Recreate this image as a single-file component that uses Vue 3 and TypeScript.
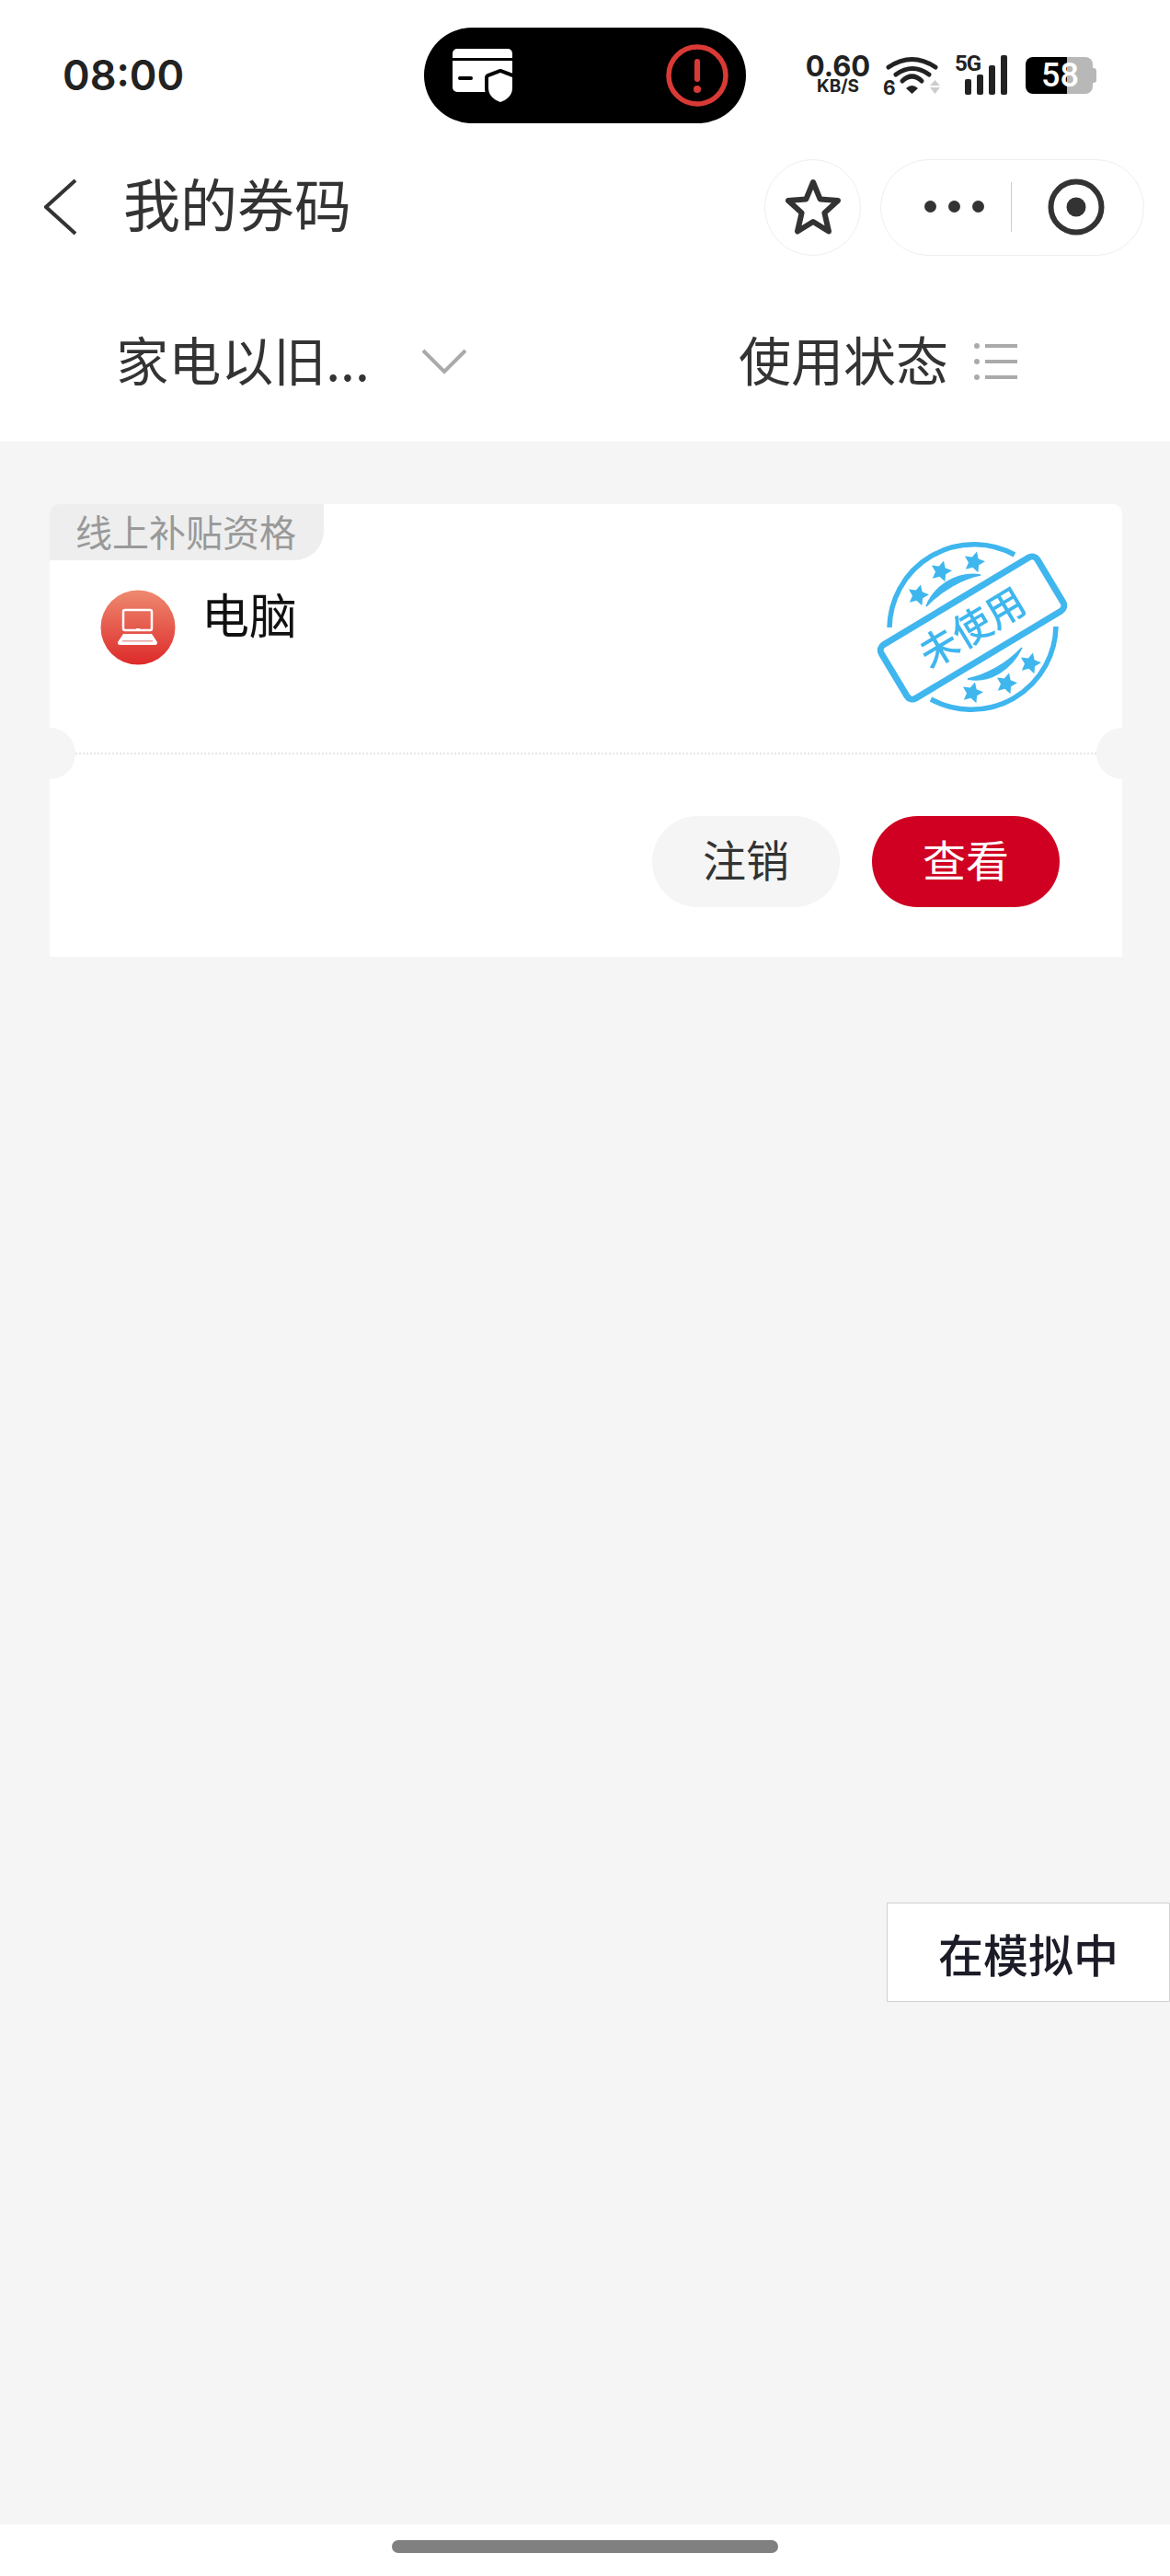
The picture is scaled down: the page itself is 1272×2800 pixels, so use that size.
<script setup lang="ts">
const stampStars: [number, number][] = [
  [98, 97],
  [123, 71],
  [159, 61],
  [157, 203],
  [194, 193],
  [220, 171],
];

const starPoints = (cx: number, cy: number, r: number) => {
  const pts: string[] = [];
  for (let i = 0; i < 10; i++) {
    const rad = i % 2 === 0 ? r : r * 0.5;
    const a = (Math.PI / 5) * i - Math.PI / 2 + 0.25;
    pts.push(`${(cx + rad * Math.cos(a)).toFixed(1)},${(cy + rad * Math.sin(a)).toFixed(1)}`);
  }
  return pts.join(' ');
};
</script>

<template>
  <div class="page">
    <div class="status">
      <span class="time">08:00</span>
      <div class="pill">
        <svg class="pill-card" width="66" height="60" viewBox="0 0 66 60">
          <rect x="0" y="1" width="65" height="47" rx="5" fill="#fff" />
          <rect x="0" y="11" width="65" height="3" fill="#000" />
          <rect x="6" y="31" width="16" height="4" rx="2" fill="#000" />
          <path d="M52 27 L65 32 V44 C65 52 58 57 52 59 C46 57 39 52 39 44 V32 Z" fill="#000" stroke="#000" stroke-width="8" stroke-linejoin="round" />
          <path d="M52 27 L65 32 V44 C65 52 58 57 52 59 C46 57 39 52 39 44 V32 Z" fill="#fff" />
        </svg>
        <svg class="pill-alert" width="68" height="68" viewBox="0 0 68 68">
          <circle cx="34" cy="34" r="31" fill="none" stroke="#d93a36" stroke-width="5.5" />
          <rect x="31" y="16" width="6" height="25" rx="3" fill="#d93a36" />
          <circle cx="34" cy="49" r="4" fill="#d93a36" />
        </svg>
      </div>
      <div class="sys">
        <div class="speed">
          <span class="speed-num">0.60</span>
          <span class="speed-unit">KB/S</span>
        </div>
        <div class="wifi">
          <span class="wifi-six">6</span>
          <svg width="62" height="44" viewBox="0 0 62 44">
            <path d="M6 13 Q31.5 -4 57 13" fill="none" stroke="#222" stroke-width="5" stroke-linecap="round" />
            <path d="M14 21 Q32 8 50 21" fill="none" stroke="#222" stroke-width="5" stroke-linecap="round" />
            <path d="M21 28 Q31.5 18 42 28" fill="none" stroke="#222" stroke-width="5" stroke-linecap="round" />
            <path d="M25 36 Q31.5 30 38 36 L31.5 42 Z" fill="#222" />
            <path d="M51 33 L56.5 27 L62 33 Z" fill="#ccc" />
            <path d="M51 35 L62 35 L56.5 42 Z" fill="#ccc" />
          </svg>
        </div>
        <div class="signal">
          <span class="signal-5g">5G</span>
          <svg width="58" height="44" viewBox="0 0 58 44">
            <rect x="11" y="26" width="7" height="17" rx="2" fill="#222" />
            <rect x="24" y="21" width="7" height="22" rx="2" fill="#222" />
            <rect x="37" y="11" width="7" height="32" rx="2" fill="#222" />
            <rect x="50" y="0" width="7" height="43" rx="2" fill="#222" />
          </svg>
        </div>
        <div class="battery">
          <span class="battery-fill"></span>
          <span class="battery-rest"></span>
          <span class="battery-nub"></span>
          <span class="battery-num">58</span>
        </div>
      </div>
    </div>

    <div class="nav">
      <svg class="back" width="36" height="62" viewBox="0 0 36 62">
        <path d="M34 2 L2 31 L34 60" fill="none" stroke="#333" stroke-width="4" />
      </svg>
      <span class="title">我的券码</span>
      <div class="fav">
        <svg width="60" height="62" viewBox="0 0 60 62">
          <path d="M30 4 L37.6 22.4 L57 24 L42.4 37.4 L47 57.5 L30 47 L13 57.5 L17.6 37.4 L3 24 L22.4 22.4 Z" fill="none" stroke="#333" stroke-width="6" stroke-linejoin="round" />
        </svg>
      </div>
      <div class="capsule">
        <div class="dots">
          <i></i><i></i><i></i>
        </div>
        <span class="cap-line"></span>
        <svg width="62" height="62" viewBox="0 0 62 62">
          <circle cx="31" cy="31" r="27.5" fill="none" stroke="#333" stroke-width="6" />
          <circle cx="31" cy="31" r="10.5" fill="#333" />
        </svg>
      </div>
    </div>

    <div class="filters">
      <div class="filter">
        <span class="filter-text">家电以旧...</span>
        <svg class="filter-arrow" width="50" height="28" viewBox="0 0 50 28">
          <path d="M2 2 L25 25 L48 2" fill="none" stroke="#aaa" stroke-width="4" />
        </svg>
      </div>
      <div class="filter filter-right">
        <span class="filter-text">使用状态</span>
        <svg class="filter-list" width="50" height="40" viewBox="0 0 50 40">
          <circle cx="5" cy="3" r="3" fill="#aaa" />
          <circle cx="5" cy="20" r="3" fill="#aaa" />
          <circle cx="5" cy="37" r="3" fill="#aaa" />
          <path d="M14 3 H49 M14 20 H49 M14 37 H49" stroke="#aaa" stroke-width="4" />
        </svg>
      </div>
    </div>

    <div class="content">
      <div class="card">
        <span class="tag">线上补贴资格</span>
        <div class="card-main">
          <svg class="pc-icon" width="82" height="82" viewBox="0 0 82 82">
            <defs>
              <linearGradient id="pcGrad" x1="0" y1="0" x2="0" y2="1">
                <stop offset="0" stop-color="#ee8a70" />
                <stop offset="1" stop-color="#dd2a2a" />
              </linearGradient>
            </defs>
            <circle cx="41" cy="41" r="40.5" fill="url(#pcGrad)" />
            <rect x="25" y="22" width="31" height="22" rx="2" fill="none" stroke="#fff" stroke-width="2.5" />
            <rect x="39" y="42" width="4" height="2" fill="#fff" />
            <path d="M25 48 H56 L62 57 Q62 60 60 60 H21 Q19 60 19 57 Z" fill="#fff" />
            <rect x="24" y="55" width="33" height="1.5" fill="#e9a0a0" />
          </svg>
          <span class="pc-name">电脑</span>
        </div>
        <svg class="stamp" width="300" height="240" viewBox="0 0 300 240">
          <g fill="none" stroke="#3fb6ee" stroke-width="5.5">
            <path d="M67 132 A92 92 0 0 1 203 53" />
            <path d="M248 131 A92 92 0 0 1 112 210" />
          </g>
          <path d="M107 109 C116 87 140 71 166 75 C146 79 124 91 107 109 Z" fill="#3fb6ee" stroke="#3fb6ee" stroke-width="1.5" />
          <path d="M211 154 C200 177 176 193 152 188 C172 184 194 172 211 154 Z" fill="#3fb6ee" stroke="#3fb6ee" stroke-width="1.5" />
          <polygon v-for="(s, i) in stampStars" :key="i" :points="starPoints(s[0], s[1], 12)" fill="#3fb6ee" />
          <g transform="translate(157 132.5) rotate(-31)">
            <rect x="-99" y="-34" width="198" height="68" rx="7" fill="#fff" stroke="#3fb6ee" stroke-width="7" />
            <text class="stamp-text" x="0" y="15" text-anchor="middle">未使用</text>
          </g>
        </svg>
        <div class="perforation">
          <span class="notch notch-left"></span>
          <span class="notch notch-right"></span>
        </div>
        <div class="card-actions">
          <button type="button" class="btn">注销</button>
          <button type="button" class="btn btn-primary">查看</button>
        </div>
      </div>
      <div class="simulating">在模拟中</div>
    </div>

    <div class="home">
      <span class="home-bar"></span>
    </div>
  </div>
</template>

<style scoped>
.page {
  width: 1272px;
  height: 2800px;
  display: flex;
  flex-direction: column;
  background: #fff;
  font-family: "Noto Sans CJK SC", "Noto Sans", sans-serif;
  color: #333;
  overflow: hidden;
}

/* status bar */
.status {
  height: 165px;
  flex: none;
  box-sizing: border-box;
  padding: 30px 0 0 68px;
  display: flex;
  align-items: flex-start;
}
.time {
  width: 393px;
  font-family: Inter, sans-serif;
  font-weight: 600;
  font-size: 45px;
  line-height: 104px;
  color: #222;
}
.pill {
  width: 350px;
  height: 104px;
  border-radius: 52px;
  background: #000;
  display: flex;
  align-items: center;
  justify-content: space-between;
  box-sizing: border-box;
  padding: 0 19px 0 31px;
}
.sys {
  margin-left: 65px;
  height: 44px;
  margin-top: 30px;
  display: flex;
  align-items: flex-start;
  color: #222;
}
.speed {
  width: 70px;
  display: flex;
  flex-direction: column;
  align-items: center;
  font-family: Inter, sans-serif;
  font-weight: 700;
}
.speed-num {
  font-size: 31px;
  line-height: 25px;
  margin-top: -1px;
}
.speed-unit {
  font-size: 19px;
  line-height: 18px;
  margin-top: 1px;
}
.wifi {
  width: 62px;
  margin-left: 14px;
  position: relative;
}
.wifi svg {
  display: block;
}
.wifi-six {
  position: absolute;
  left: 0;
  top: 25px;
  font-family: Inter, sans-serif;
  font-weight: 700;
  font-size: 21px;
  line-height: 22px;
}
.signal {
  margin-left: 16px;
  width: 58px;
  position: relative;
}
.signal svg {
  display: block;
}
.signal-5g {
  position: absolute;
  left: 0;
  top: 0;
  font-family: Roboto, sans-serif;
  font-weight: 700;
  font-size: 24px;
  line-height: 18px;
  letter-spacing: -1px;
}
.battery {
  margin-left: 19px;
  margin-top: 2px;
  width: 77px;
  height: 40px;
  display: flex;
  position: relative;
}
.battery-fill {
  width: 45px;
  background: #000;
  border-radius: 8px 0 0 8px;
}
.battery-rest {
  width: 28px;
  background: #b8b8b8;
  border-radius: 0 8px 8px 0;
}
.battery-nub {
  width: 4px;
  height: 16px;
  margin-top: 12px;
  background: #b8b8b8;
  border-radius: 0 3px 3px 0;
}
.battery-num {
  position: absolute;
  left: 17px;
  top: 0;
  font-family: Roboto, sans-serif;
  font-weight: 500;
  font-size: 36px;
  line-height: 40px;
  color: #fff;
}

/* nav */
.nav {
  height: 120px;
  flex: none;
  display: flex;
  align-items: center;
  box-sizing: border-box;
  padding-left: 48px;
}
.back {
  flex: none;
}
.title {
  margin-left: 50px;
  margin-bottom: 10px;
  font-size: 62px;
  line-height: 80px;
  color: #333;
}
.fav {
  margin-left: auto;
  width: 105px;
  height: 105px;
  box-sizing: border-box;
  border: 1px solid #eee;
  border-radius: 50%;
  display: flex;
  align-items: center;
  justify-content: center;
}
.capsule {
  margin-left: 21px;
  margin-right: 28px;
  width: 287px;
  height: 105px;
  box-sizing: border-box;
  border: 1px solid #eee;
  border-radius: 53px;
  display: flex;
  align-items: center;
  padding-left: 47px;
}
.dots {
  display: flex;
  gap: 13px;
  margin-bottom: 2px;
}
.dots i {
  width: 13px;
  height: 13px;
  border-radius: 50%;
  background: #333;
}
.cap-line {
  width: 1px;
  height: 54px;
  background: #ccc;
  margin: 0 39px 0 29px;
}

/* filters */
.filters {
  height: 195px;
  flex: none;
  box-sizing: border-box;
  padding-top: 21px;
  display: flex;
}
.filter {
  flex: 1;
  display: flex;
  align-items: center;
  justify-content: center;
  font-size: 57px;
  color: #333;
}
.filter-right {
  padding-left: 4px;
}
.filter-text {
  margin-bottom: 9px;
}
.filter-arrow {
  margin-left: 56px;
}
.filter-list {
  margin-left: 26px;
}

/* content */
.content {
  flex: 1;
  background: #f5f5f5;
  box-sizing: border-box;
  padding: 68px 52px 0 54px;
  position: relative;
}
.card {
  position: relative;
  height: 492px;
  background: #fff;
  border-radius: 10px 10px 0 0;
  display: flex;
  flex-direction: column;
}
.tag {
  align-self: flex-start;
  height: 61px;
  width: 298px;
  box-sizing: border-box;
  padding-left: 28px;
  background: #eee;
  color: #999;
  font-size: 40px;
  line-height: 58px;
  border-radius: 10px 0 32px 0;
  white-space: nowrap;
}
.card-main {
  height: 209px;
  flex: none;
  box-sizing: border-box;
  padding: 32px 0 0 55px;
  display: flex;
  align-items: flex-start;
}
.pc-name {
  margin-left: 28px;
  margin-top: -10px;
  font-size: 52px;
  line-height: 72px;
  color: #111;
}
.stamp {
  position: absolute;
  left: 846px;
  top: 2px;
  filter: blur(0.4px);
}
.stamp-text {
  font-family: "Noto Sans CJK SC", sans-serif;
  font-size: 42px;
  font-weight: 500;
  fill: #3fb6ee;
}
.perforation {
  height: 0;
  border-top: 2px dotted #e6e6e6;
  margin: 0 28px;
  position: relative;
}
.notch {
  position: absolute;
  top: -29px;
  width: 28px;
  height: 56px;
  background: #f5f5f5;
}
.notch-left {
  left: -28px;
  border-radius: 0 28px 28px 0;
}
.notch-right {
  right: -28px;
  border-radius: 28px 0 0 28px;
}
.card-actions {
  flex: 1;
  display: flex;
  align-items: flex-start;
  justify-content: flex-end;
  gap: 35px;
  padding: 67px 68px 0 0;
}
.btn {
  width: 204px;
  height: 99px;
  border: 0;
  border-radius: 50px;
  background: #f5f5f5;
  color: #333;
  font-family: inherit;
  font-size: 47px;
  padding: 0 0 8px;
}
.btn-primary {
  background: #cf0022;
  color: #fff;
}
.simulating {
  position: absolute;
  right: 0;
  top: 1588px;
  width: 308px;
  height: 108px;
  box-sizing: border-box;
  border: 1.5px solid #d0d0d0;
  background: #fff;
  display: flex;
  align-items: center;
  justify-content: center;
  color: #1c1c28;
  font-size: 49px;
  font-weight: 500;
}

/* home indicator */
.home {
  height: 56px;
  flex: none;
  display: flex;
  align-items: flex-start;
  justify-content: center;
  padding-top: 17px;
  box-sizing: border-box;
}
.home-bar {
  width: 420px;
  height: 14px;
  border-radius: 7px;
  background: #808080;
}
</style>
